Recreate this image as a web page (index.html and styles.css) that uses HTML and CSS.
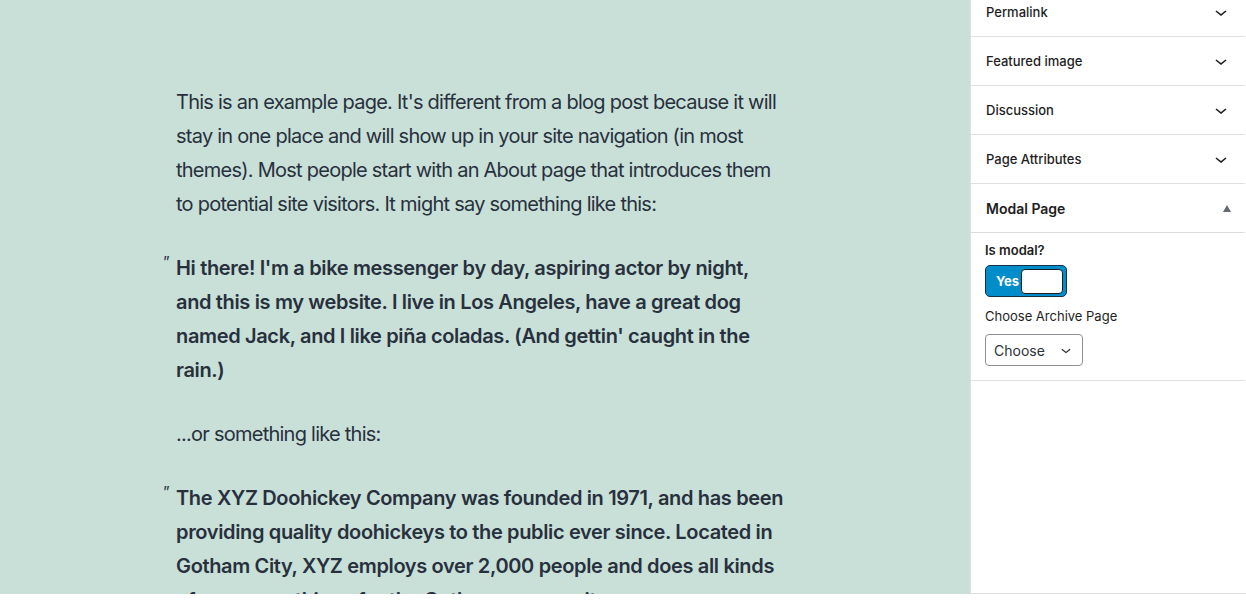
FILE: index.html
```html
<!DOCTYPE html>
<html lang="en">
<head>
<meta charset="utf-8">
<title>Page editor</title>
<link rel="stylesheet" href="styles.css">
</head>
<body>
<div class="layout">
  <main class="canvas">
    <div class="content">
      <p>This is an example page. It's different from a blog post because it will stay in one place and will show up in your site navigation (in most themes). Most people start with an About page that introduces them to potential site visitors. It might say something like this:</p>
      <blockquote class="quote"><p>Hi there! I'm a bike messenger by day, aspiring actor by night, and this is my website. I live in Los Angeles, have a great dog named Jack, and I like piña coladas. (And gettin' caught in the rain.)</p></blockquote>
      <p>...or something like this:</p>
      <blockquote class="quote"><p>The XYZ Doohickey Company was founded in 1971, and has been providing quality doohickeys to the public ever since. Located in Gotham City, XYZ employs over 2,000 people and does all kinds of awesome things for the Gotham community.</p></blockquote>
    </div>
  </main>
  <aside class="sidebar">
    <div class="panels">
      <div class="panel">
        <div class="panel-head"><span>Permalink</span><svg class="chev" viewBox="0 0 24 24" width="24" height="24"><path d="M17.5 11.6L12 16l-5.5-4.4.9-1.2L12 14l4.5-3.6 1 1.2z"/></svg></div>
      </div>
      <div class="panel">
        <div class="panel-head"><span>Featured image</span><svg class="chev" viewBox="0 0 24 24" width="24" height="24"><path d="M17.5 11.6L12 16l-5.5-4.4.9-1.2L12 14l4.5-3.6 1 1.2z"/></svg></div>
      </div>
      <div class="panel">
        <div class="panel-head"><span>Discussion</span><svg class="chev" viewBox="0 0 24 24" width="24" height="24"><path d="M17.5 11.6L12 16l-5.5-4.4.9-1.2L12 14l4.5-3.6 1 1.2z"/></svg></div>
      </div>
      <div class="panel">
        <div class="panel-head"><span>Page Attributes</span><svg class="chev" viewBox="0 0 24 24" width="24" height="24"><path d="M17.5 11.6L12 16l-5.5-4.4.9-1.2L12 14l4.5-3.6 1 1.2z"/></svg></div>
      </div>
      <div class="panel open">
        <div class="panel-head modal-head"><span>Modal Page</span><span class="tri"></span></div>
        <div class="panel-body">
          <div class="field-label">Is modal?</div>
          <div class="toggle"><span class="toggle-text">Yes</span><span class="toggle-knob"></span></div>
          <div class="select-label">Choose Archive Page</div>
          <div class="select"><span>Choose</span><svg viewBox="0 0 24 24" width="20" height="20"><path d="M17.5 11.6L12 16l-5.5-4.4.9-1.2L12 14l4.5-3.6 1 1.2z"/></svg></div>
        </div>
      </div>
    </div>
  </aside>
</div>
</body>
</html>
```

FILE: styles.css
```css
* { box-sizing: border-box; }
html, body { margin: 0; padding: 0; background: #fff; }
body { font-family: Inter, "Noto Sans", sans-serif; color: #1e1e1e; }

.layout {
  display: flex;
  height: 594px;
  overflow: hidden;
}

.canvas {
  flex: 0 0 970px;
  background: #c9e0d8;
  color: #28303d;
  overflow: hidden;
  padding: 85px 8px 0 0;
}

.content {
  width: 610px;
  margin: 0 auto;
  font-size: 20px;
  line-height: 34px;
  letter-spacing: -0.75px;
}

.content p { margin: 0 0 30px; }

.quote {
  position: relative;
  margin: 0 0 30px;
  font-weight: 600;
  letter-spacing: -0.35px;
}
.quote p { margin: 0; }
.quote::before {
  content: "\201D";
  position: absolute;
  left: -13px;
  top: 1px;
  font-size: 15px;
  font-weight: 400;
  line-height: 20px;
  color: #28303d;
}

.sidebar {
  flex: 0 0 276px;
  border-left: 1px solid #e0e0e0;
  border-bottom: 1px solid #dcdcdc;
  background: #fff;
  overflow: hidden;
}

.panels { margin-top: -12px; padding-right: 1px; }

.panel { border-bottom: 1px solid #e0e0e0; }

.panel-head {
  height: 48px;
  display: flex;
  align-items: center;
  justify-content: space-between;
  padding: 0 12px 0 15px;
  font-size: 13px;
  font-weight: 500;
  color: #1e1e1e;
}
.chev { fill: #1e1e1e; }

.modal-head {
  height: 49px;
  font-size: 14px;
  font-weight: 600;
  border-bottom: 1px solid #dcdcdc;
  padding-right: 14px;
}
.tri {
  width: 0; height: 0;
  border-left: 4px solid transparent;
  border-right: 4px solid transparent;
  border-bottom: 7px solid #646970;
}

.panel-body {
  padding: 9px 16px 14px 14px;
  font-size: 13px;
}

.field-label {
  font-weight: 600;
  font-size: 13px;
  line-height: 16px;
  margin-bottom: 7px;
}

.toggle {
  width: 82px;
  height: 32px;
  background: #008dc9;
  border: 1px solid #12324a;
  border-radius: 5px;
  display: flex;
  align-items: center;
  justify-content: space-between;
  padding: 0 3px 0 10px;
}
.toggle-text { color: #fff; font-weight: 700; font-size: 13px; }
.toggle-knob {
  width: 42px;
  height: 25px;
  background: #fff;
  border: 1px solid #1e1e1e;
  border-radius: 4px;
}

.select-label {
  margin-top: 11px;
  line-height: 16px;
  font-size: 13px;
  color: #1e1e1e;
}

.select {
  margin-top: 10px;
  width: 98px;
  height: 32px;
  border: 1px solid #8c8f94;
  border-radius: 4px;
  display: flex;
  align-items: center;
  justify-content: space-between;
  padding: 0 6px 0 8px;
  font-size: 14px;
  color: #2c3338;
}
.select svg { fill: #2c3338; }
```
